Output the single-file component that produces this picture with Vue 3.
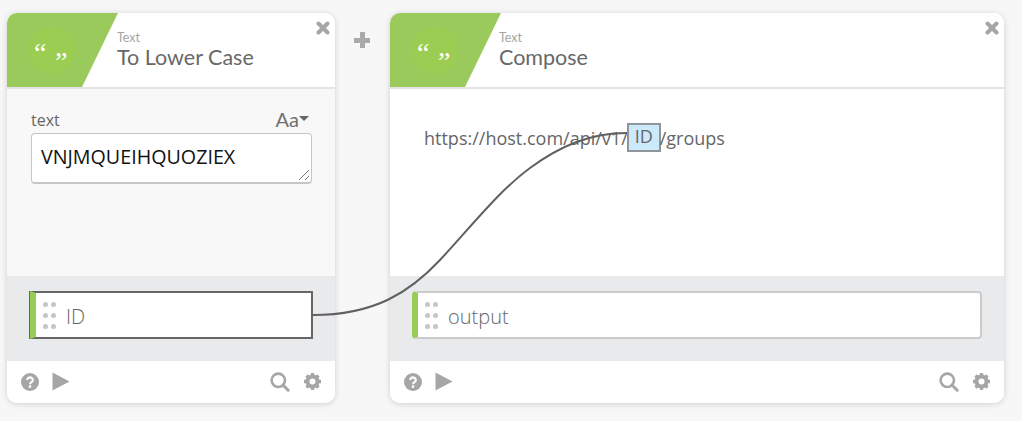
<script setup>
const cards = [
  { id: 'lower', title: 'To Lower Case', port: 'ID', wired: true },
  { id: 'compose', title: 'Compose', port: 'output', wired: false }
];
</script>

<template>
  <div class="canvas">
    <template v-for="(card, index) in cards" :key="card.id">
      <div v-if="index > 0" class="between">
        <span class="plus"></span>
      </div>
      <section class="card" :class="'card-' + card.id">
        <header class="card-head">
          <div class="badge">
            <span class="badge-circle"></span>
            <span class="quote open">“</span>
            <span class="quote close">”</span>
          </div>
          <div class="head-text">
            <div class="kind">Text</div>
            <div class="title">{{ card.title }}</div>
          </div>
          <svg class="close-x" width="14" height="14" viewBox="0 0 14 14">
            <path d="M2.5 2.5l9 9M11.5 2.5l-9 9" stroke="#a6a6a6" stroke-width="4" stroke-linecap="round" />
          </svg>
        </header>

        <div class="card-body">
          <template v-if="card.id === 'lower'">
            <div class="field-label">
              <span>text</span>
              <span class="case-switch">Aa<i class="caret"></i></span>
            </div>
            <div class="text-box">
              VNJMQUEIHQUOZIEX
              <svg class="grip" width="12" height="12" viewBox="0 0 12 12">
                <path d="M1 11L11 1M7 11l4-4" stroke="#777" stroke-width="1" fill="none" />
              </svg>
            </div>
          </template>
          <div v-else class="compose-line">
            <span>https://host.com/api/v1/</span><span class="token">ID</span><span class="tail">/groups</span>
          </div>
        </div>

        <div class="card-output">
          <div class="port" :class="{ wired: card.wired }">
            <span class="dots"><i v-for="n in 6" :key="n"></i></span>
            <span class="port-name">{{ card.port }}</span>
          </div>
        </div>

        <footer class="card-foot">
          <svg width="18" height="18" viewBox="0 0 18 18">
            <circle cx="9" cy="9" r="9" fill="#a6a6a6" />
            <path d="M6.2 7a2.8 2.6 0 1 1 4.3 2.2c-1 .6-1.5 1-1.5 2" stroke="#fff" stroke-width="2.1" fill="none" />
            <rect x="7.8" y="12.4" width="2.4" height="2.4" fill="#fff" />
          </svg>
          <svg class="play" width="18" height="19" viewBox="0 0 18 19">
            <path d="M0.5 0.5L17.5 9.5L0.5 18.5Z" fill="#a6a6a6" />
          </svg>
          <span class="spacer"></span>
          <svg width="20" height="20" viewBox="0 0 20 20">
            <circle cx="8.3" cy="8.3" r="6.7" stroke="#a6a6a6" stroke-width="2.6" fill="none" />
            <path d="M13.2 13.2L18.2 18.2" stroke="#a6a6a6" stroke-width="3" stroke-linecap="round" />
          </svg>
          <svg class="gear" width="19" height="19" viewBox="0 0 19 19">
            <circle cx="9.5" cy="9.5" r="5.2" stroke="#a6a6a6" stroke-width="3.6" fill="none" />
            <path d="M9.5 1v17M1 9.5h17M3.5 3.5l12 12M15.5 3.5l-12 12" stroke="#a6a6a6" stroke-width="3.4" />
            <circle cx="9.5" cy="9.5" r="3" fill="#fff" />
          </svg>
        </footer>
      </section>
    </template>

    <svg class="wire" width="1022" height="421" viewBox="0 0 1022 421">
      <path d="M313 315C375 315 410 292 440 260C475 222 500 190 530 168C560 146 590 133 627 133" stroke="#606060" stroke-width="2" fill="none" />
    </svg>
  </div>
</template>

<style>
html, body {
  margin: 0;
  background: #f7f7f7;
}
</style>

<style scoped>
.canvas {
  position: relative;
  display: flex;
  width: 1022px;
  height: 421px;
  box-sizing: border-box;
  padding: 13px 18px 18px 7px;
  overflow: hidden;
  font-family: "Open Sans", sans-serif;
  color: #666;
}

.between {
  width: 55px;
  flex: none;
  display: flex;
  justify-content: center;
  padding-top: 19px;
}
.plus {
  width: 16px;
  height: 16px;
  margin-left: -1px;
  background:
    linear-gradient(#a9a9a9, #a9a9a9) center / 16px 5px no-repeat,
    linear-gradient(#a9a9a9, #a9a9a9) center / 5px 16px no-repeat;
  border-radius: 1px;
}

.card {
  display: flex;
  flex-direction: column;
  background: #fff;
  border-radius: 10px;
  box-shadow: 0 1px 6px rgba(0, 0, 0, 0.16);
  overflow: hidden;
}
.card-lower {
  width: 328px;
  flex: none;
}
.card-compose {
  flex: 1;
}

.card-head {
  position: relative;
  display: flex;
  height: 74px;
  flex: none;
  border-bottom: 2px solid #e4e4e4;
  box-sizing: content-box;
  background: #fff;
}
.badge {
  position: relative;
  width: 111px;
  flex: none;
  background: #9aca5c;
  clip-path: polygon(0 0, 100% 0, 75px 100%, 0 100%);
  overflow: hidden;
}
.badge-circle {
  position: absolute;
  left: 21px;
  top: 14px;
  width: 47px;
  height: 47px;
  border-radius: 50%;
  background: #9bcd52;
}
.quote {
  position: absolute;
  font-family: "Liberation Serif", serif;
  font-size: 28px;
  line-height: 28px;
  color: #fff;
}
.quote.open {
  left: 27px;
  top: 26px;
}
.quote.close {
  left: 48px;
  top: 35px;
}

.head-text {
  padding-top: 17px;
  margin-left: -1px;
  font-family: Lato, sans-serif;
}
.card-compose .head-text {
  margin-left: -2px;
}
.kind {
  font-size: 12.5px;
  line-height: 15px;
  color: #a4a4a4;
}
.title {
  font-size: 21.5px;
  line-height: 26px;
  margin-top: -1px;
  color: #686868;
}
.close-x {
  position: absolute;
  right: 5px;
  top: 8px;
}

.card-body {
  flex: 1;
  min-height: 0;
  padding: 21px 23px 0 24px;
}
.card-lower .card-body {
  background: #f8f8f8;
}
.field-label {
  display: flex;
  justify-content: space-between;
  align-items: center;
  height: 20px;
  font-size: 16px;
  color: #666;
}
.case-switch {
  display: flex;
  align-items: center;
  margin: -3px 3px 0 0;
  font-family: Lato, sans-serif;
  font-size: 20px;
  color: #707070;
}
.caret {
  width: 0;
  height: 0;
  border-left: 5px solid transparent;
  border-right: 5px solid transparent;
  border-top: 5px solid #666;
}
.text-box {
  position: relative;
  height: 51px;
  margin-top: 3px;
  padding: 9px 9px;
  box-sizing: border-box;
  border: 1px solid #c6c6c6;
  border-bottom-width: 2px;
  border-radius: 4px;
  background: #fff;
  color: #111;
  font-size: 19.7px;
  line-height: 27px;
}
.grip {
  position: absolute;
  right: 1px;
  bottom: 1px;
}

.compose-line {
  display: flex;
  align-items: center;
  padding: 13px 0 0 10px;
  font-size: 18px;
  line-height: 24px;
  color: #666;
}
.token {
  width: 34px;
  height: 29px;
  margin: 0 0 0 -1px;
  box-sizing: border-box;
  border: 2px solid #8f9598;
  background: #cdeafb;
  text-align: center;
  line-height: 23px;
}
.tail {
  margin-left: -1px;
}

.card-output {
  height: 85px;
  flex: none;
  box-sizing: border-box;
  padding: 15px 22px 0 23px;
  background: #e9eaec;
}
.card-compose .card-output {
  padding-left: 22px;
}
.port {
  display: flex;
  align-items: center;
  height: 48px;
  box-sizing: border-box;
  border: 2px solid #cbcbcb;
  border-left: 6px solid #98cc57;
  border-radius: 4px;
  background: #fff;
}
.port.wired {
  border-color: #666;
  border-left-color: #98cc57;
  border-radius: 0;
  box-shadow: -1px 0 0 #666;
}
.dots {
  display: grid;
  grid-template-columns: 5px 5px;
  gap: 6px 3px;
  width: 13px;
  margin-left: 7px;
}
.dots i {
  width: 5px;
  height: 5px;
  border-radius: 50%;
  background: #c6c6c6;
}
.port-name {
  margin-left: 10px;
  padding-top: 2px;
  font-size: 20px;
  font-weight: 300;
  color: #666;
}

.card-foot {
  display: flex;
  align-items: center;
  height: 42px;
  flex: none;
  box-sizing: border-box;
  padding: 0 13px 1px 14px;
  background: #fff;
}
.play {
  margin-left: 13px;
}
.spacer {
  flex: 1;
}
.gear {
  margin-left: 13px;
}

.wire {
  position: absolute;
  left: 0;
  top: 0;
  pointer-events: none;
}
</style>
